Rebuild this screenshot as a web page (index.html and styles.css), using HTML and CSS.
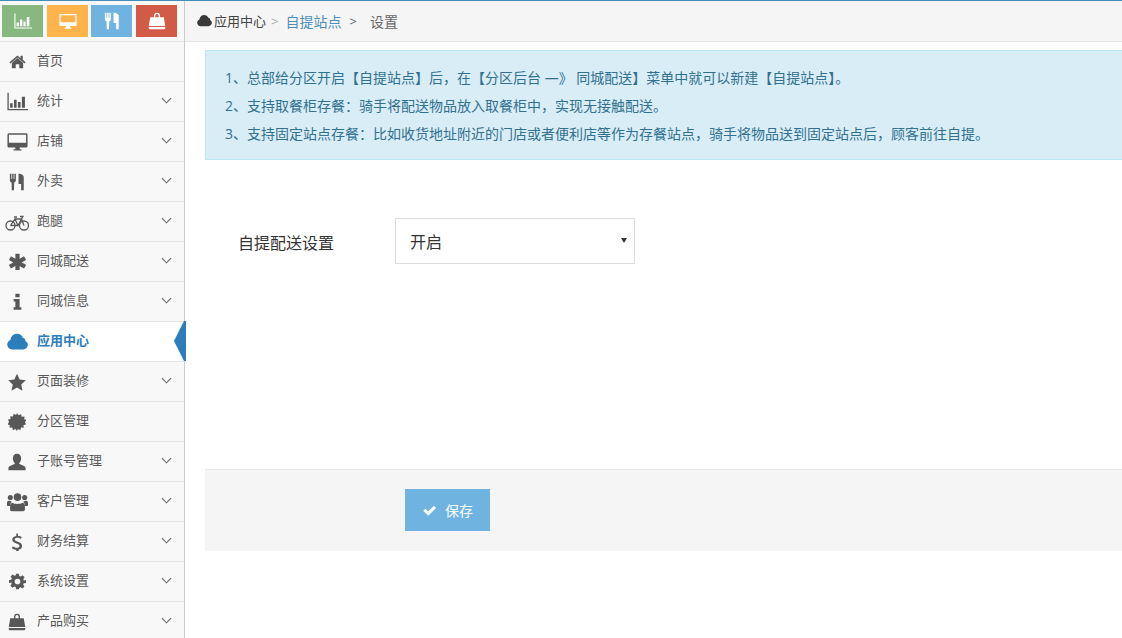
FILE: index.html
```html
<!DOCTYPE html>
<html lang="zh-CN">
<head>
<meta charset="utf-8">
<title>自提站点设置</title>
<link rel="stylesheet" href="styles.css">
</head>
<body>
<svg class="defs" width="0" height="0" aria-hidden="true">
  <symbol id="i-home" viewBox="0 0 24 24"><path d="M12 7.200 4 14v7.500h5.500v-5.500h5v5.500H20V14zM12 3.500.6 13l1.500 1.800L12 6.500l9.900 8.300 1.500-1.800-4-3.400V4h-3.200v3.300z"/></symbol>
  <symbol id="i-chart" viewBox="0 0 24 24"><path d="M.5 2H2v18.500h22V22H.5zM3.500 14h3v5h-3zM8 10h3v9H8zM12.500 12.500h3V19h-3zM17 6.500h3.500V19H17z"/></symbol>
  <symbol id="i-desk" viewBox="0 0 24 24"><path fill-rule="evenodd" d="M2.500 2.500h19A1.800 1.800 0 0 1 23.500 4.300V17a1.800 1.800 0 0 1-2 1.800h-7v2h2v1.400h-9v-1.400h2v-2h-7A1.800 1.800 0 0 1 .5 17V4.300A1.800 1.800 0 0 1 2.500 2.500zM2.200 4.200v9.300h19.600V4.200z"/></symbol>
  <symbol id="i-fork" viewBox="0 0 24 24"><path d="M2.500 1h2v7h1V1h2v7h1V1h2v8.500c0 1.500-1 2.500-2.300 3L8 23H5l-.2-10.500C3.500 12 2.500 11 2.500 9.500zM14 1c4 0 7 1.500 7 5v17h-3.500v-8.500H14z"/></symbol>
  <symbol id="i-bike" viewBox="0 0 24 24"><g fill="none" stroke-width="1.300"><circle cx="5.500" cy="15.500" r="4.500"/><circle cx="19" cy="15.500" r="4.500"/><path d="M5.500 15.500 10 9h6.500l2.500 6.500M10 9l3 6.500h-7.500M16.500 9 13 15.500M9 7h3M15 6.500h3l-1.500 2.500"/></g></symbol>
  <symbol id="i-ast" viewBox="0 0 24 24"><path d="M9 1h6v7.200l6.200-3.600 3 5.200L18 13.300l6.200 3.500-3 5.200-6.200-3.600V24H9v-5.600L2.800 22l-3-5.200L6 13.300-.2 9.800l3-5.200L9 8.200z"/></symbol>
  <symbol id="i-info" viewBox="0 0 24 24"><path d="M9 1h6v5H9zM6.500 8.500h8.500v11.500h2.500v3.500h-11V20H9v-8H6.500z"/></symbol>
  <symbol id="i-cloud" viewBox="0 0 24 24"><path d="M6 21c-3.200 0-5.700-2.500-5.700-5.500 0-2.400 1.500-4.400 3.600-5.200C4.300 6.200 7.500 3.200 11.500 3.200c3 0 5.600 1.800 6.600 4.500 2.700.4 3.200 2.600 2.900 4 1.800.6 2.800 2 2.800 4 0 3-2.300 5.300-5.300 5.300z"/></symbol>
  <symbol id="i-star" viewBox="0 0 24 24"><path d="m12 1 3.500 7.600 8.200 1-6 5.700 1.600 8.200L12 19.400l-7.300 4.100 1.600-8.200-6-5.700 8.200-1z"/></symbol>
  <symbol id="i-cert" viewBox="0 0 24 24"><path d="m12 0 2.200 3 3.300-1.500.8 3.500 3.700-.4-.4 3.700 3.500.8L22.600 12l1.500 3.300-3.500.8.400 3.700-3.700-.4-.8 3.500-3.300-1.500L12 24l-2.200-2.600-3.300 1.500-.8-3.500-3.700.4.400-3.700-3.500-.8L1.400 12-.1 8.700l3.500-.8L3 4.200l3.700.4.800-3.500L10.800 2.600z"/></symbol>
  <symbol id="i-user" viewBox="0 0 24 24"><path d="M12 1c3.400 0 5.500 2.700 5.500 6.200 0 2.500-1 4.800-2.400 6-.4.400-.3 1.200.3 1.500l6 2.500c1.500.6 2.100 2 2.100 3.300V23H.5v-2.500c0-1.300.6-2.700 2.100-3.300l6-2.500c.6-.3.700-1.100.3-1.500-1.400-1.200-2.400-3.500-2.400-6C6.500 3.700 8.600 1 12 1z"/></symbol>
  <symbol id="i-group" viewBox="0 0 24 24"><circle cx="12" cy="7" r="4.300"/><circle cx="3.800" cy="7.500" r="2.900"/><circle cx="20.200" cy="7.500" r="2.900"/><path d="M6 13.500c3 1.800 9 1.800 12 0 1.500.5 2.500 2 2.500 4.500v3c0 1.200-1 2-2 2h-13c-1 0-2-.8-2-2v-3c0-2.500 1-4 2.500-4.500zM0 12.500c1.200-1.600 2.500-1.800 3.800-1 .8.500 1.400.7 1.900.8-1.500 1-2.200 2.700-2.200 4.700H.6c-.4 0-.6-.3-.6-.6zM24 12.500c-1.200-1.600-2.500-1.800-3.800-1-.8.500-1.400.7-1.900.8 1.500 1 2.200 2.700 2.200 4.700h2.900c.4 0 .6-.3.600-.6z"/></symbol>
  <symbol id="i-dollar" viewBox="0 0 24 24"><path d="M11 .5h2.200v3c2.200.2 4 1 5.200 1.800l-1.100 2.500c-1.400-.9-3.100-1.600-5-1.600-2 0-3.300.9-3.300 2.300 0 1.500 1.500 2.100 4.200 3.100 3.300 1.200 5.600 2.500 5.600 5.600 0 2.700-2 4.600-4.600 5v2.800H11v-2.700c-2.300-.1-4.500-1-5.900-2.100l1.300-2.400c1.500 1.100 3.500 2 5.400 2 2.200 0 3.500-1 3.500-2.500 0-1.600-1.400-2.300-4-3.300-3.200-1.200-5.600-2.400-5.600-5.300 0-2.600 2-4.400 5.300-4.800z"/></symbol>
  <symbol id="i-gear" viewBox="0 0 24 24"><path fill-rule="evenodd" d="M10 1h4l.6 3.200 1.900.8 2.700-1.800 2.800 2.800-1.800 2.700.8 1.900L24 10v4l-3.200.6-.8 1.900 1.800 2.700-2.800 2.800-2.700-1.800-1.900.8L14 23h-4l-.6-3.200-1.900-.8-2.700 1.800-2.800-2.800 1.800-2.700-.8-1.900L0 14v-4l3.200-.6.8-1.900-1.800-2.700 2.800-2.800 2.700 1.800 1.900-.8zM12 8a4 4 0 1 0 0 8 4 4 0 0 0 0-8z"/></symbol>
  <symbol id="i-bag" viewBox="0 0 24 24"><path fill-rule="evenodd" d="M8 7V5a4 4 0 0 1 8 0V7h5l2 11.500H1L3 7zM9.800 7h4.400V5a2.200 2.200 0 0 0-4.400 0zM1 20h22v1.200c0 1-.8 1.800-1.800 1.800H2.800c-1 0-1.800-.8-1.800-1.800z"/></symbol>
  <symbol id="i-check" viewBox="0 0 24 24"><path d="m2 12.500 3.500-3.500 4.500 4.500L19 4.500 22.500 8 10 20.500z"/></symbol>
  <symbol id="i-down" viewBox="0 0 24 24"><path d="M2 7 12 17 22 7" fill="none" stroke="currentColor" stroke-width="2.400"/></symbol>
</svg>
<div class="page">
  <aside class="sidebar">
    <div class="shortcuts">
      <a class="sc sc-green"><svg class="sc-ic"><use href="#i-chart"/></svg></a>
      <a class="sc sc-yellow"><svg class="sc-ic"><use href="#i-desk"/></svg></a>
      <a class="sc sc-blue"><svg class="sc-ic"><use href="#i-fork"/></svg></a>
      <a class="sc sc-red"><svg class="sc-ic"><use href="#i-bag"/></svg></a>
    </div>
    <ul class="menu">
      <li class="item"><span class="ico"><svg class="i16"><use href="#i-home"/></svg></span><span class="label">首页</span></li>
      <li class="item"><span class="ico"><svg class="i21"><use href="#i-chart"/></svg></span><span class="label">统计</span><svg class="chev"><use href="#i-down"/></svg></li>
      <li class="item"><span class="ico"><svg class="i21"><use href="#i-desk"/></svg></span><span class="label">店铺</span><svg class="chev"><use href="#i-down"/></svg></li>
      <li class="item"><span class="ico"><svg class="i18"><use href="#i-fork"/></svg></span><span class="label">外卖</span><svg class="chev"><use href="#i-down"/></svg></li>
      <li class="item"><span class="ico"><svg class="i24 bike"><use href="#i-bike"/></svg></span><span class="label">跑腿</span><svg class="chev"><use href="#i-down"/></svg></li>
      <li class="item"><span class="ico"><svg class="i16"><use href="#i-ast"/></svg></span><span class="label">同城配送</span><svg class="chev"><use href="#i-down"/></svg></li>
      <li class="item"><span class="ico"><svg class="i16"><use href="#i-info"/></svg></span><span class="label">同城信息</span><svg class="chev"><use href="#i-down"/></svg></li>
      <li class="item active"><span class="ico"><svg class="i21"><use href="#i-cloud"/></svg></span><span class="label">应用中心</span><span class="pointer"></span></li>
      <li class="item"><span class="ico"><svg class="i18"><use href="#i-star"/></svg></span><span class="label">页面装修</span><svg class="chev"><use href="#i-down"/></svg></li>
      <li class="item"><span class="ico"><svg class="i18"><use href="#i-cert"/></svg></span><span class="label">分区管理</span></li>
      <li class="item"><span class="ico"><svg class="i18"><use href="#i-user"/></svg></span><span class="label">子账号管理</span><svg class="chev"><use href="#i-down"/></svg></li>
      <li class="item"><span class="ico"><svg class="i21"><use href="#i-group"/></svg></span><span class="label">客户管理</span><svg class="chev"><use href="#i-down"/></svg></li>
      <li class="item"><span class="ico"><svg class="i18"><use href="#i-dollar"/></svg></span><span class="label">财务结算</span><svg class="chev"><use href="#i-down"/></svg></li>
      <li class="item"><span class="ico"><svg class="i16"><use href="#i-gear"/></svg></span><span class="label">系统设置</span><svg class="chev"><use href="#i-down"/></svg></li>
      <li class="item"><span class="ico"><svg class="i18"><use href="#i-bag"/></svg></span><span class="label">产品购买</span><svg class="chev"><use href="#i-down"/></svg></li>
    </ul>
  </aside>
  <main class="main">
    <nav class="crumbs">
      <svg class="crumb-ic"><use href="#i-cloud"/></svg>
      <span class="crumb-root">应用中心</span>
      <span class="sep-a">&gt;</span>
      <a class="crumb-link">自提站点</a>
      <span class="sep-b">&gt;</span>
      <span class="crumb-cur">设置</span>
    </nav>
    <section class="content">
      <div class="notice">
        <p>1、总部给分区开启【自提站点】后，在【分区后台 —》 同城配送】菜单中就可以新建【自提站点】。</p>
        <p>2、支持取餐柜存餐：骑手将配送物品放入取餐柜中，实现无接触配送。</p>
        <p>3、支持固定站点存餐：比如收货地址附近的门店或者便利店等作为存餐站点，骑手将物品送到固定站点后，顾客前往自提。</p>
      </div>
      <form class="form">
        <div class="field">
          <label class="field-label" for="pick">自提配送设置</label>
          <div class="select-wrap">
            <select id="pick" class="select"><option>开启</option><option>关闭</option></select>
          </div>
        </div>
        <div class="actions">
          <button type="button" class="save"><svg class="save-ic"><use href="#i-check"/></svg>保存</button>
        </div>
      </form>
    </section>
  </main>
</div>
</body>
</html>
```
FILE: styles.css
```css
* { box-sizing: border-box; }
html, body { margin: 0; height: 100%; overflow: hidden; background: #fff; }
body { font-family: "Open Sans", "Noto Sans CJK SC", sans-serif; font-size: 13px; color: #555; }
.defs { position: absolute; }
.page { display: flex; height: 638px; border-top: 1px solid #438eb9; overflow: hidden; }
.sidebar { flex: 0 0 185px; background: #f8f8f8; border-right: 1px solid #ccc; }
.shortcuts { height: 40px; display: flex; gap: 4px; padding: 4px 0 0 2px; }
.sc { width: 41px; height: 32px; display: flex; align-items: center; justify-content: center; }
.sc-green { background: #87b87f; }
.sc-yellow { background: #ffb44b; }
.sc-blue { background: #6fb3e0; margin-left: -1px; }
.sc-red { background: #d15b47; }
.sc-ic { width: 18px; height: 18px; fill: #fff; }
.menu { list-style: none; margin: 0; padding: 0; }
.item { position: relative; height: 40px; display: flex; align-items: center; border-top: 1px solid #e5e5e5; color: #585858; }
.ico { flex: 0 0 34px; display: flex; justify-content: center; fill: #585858; stroke: #585858; }
.ico svg { stroke-width: 0; }
.i16 { width: 17px; height: 17px; }
.i18 { width: 18px; height: 18px; }
.i21 { width: 21px; height: 21px; }
.i24 { width: 24px; height: 24px; }
.label { margin-left: 3px; flex: 1; line-height: 20px; position: relative; top: -2px; }
.chev { width: 11px; height: 11px; margin-right: 12px; color: #666; position: relative; top: -1px; }
.active { background: #fff; color: #2b7dbc; font-weight: 700; }
.active .ico { fill: #2b7dbc; stroke: #2b7dbc; }
.pointer { position: absolute; right: -2px; top: -1px; width: 12px; height: 40px; background: #2b7dbc; clip-path: polygon(0 50%, 10px 0, 100% 0, 100% 100%, 10px 100%); }
.main { flex: 1; min-width: 0; }
.crumbs { height: 41px; background: #f5f5f5; border-bottom: 1px solid #e5e5e5; display: flex; align-items: center; padding-left: 12px; font-size: 14px; color: #666; }
.crumb-ic { width: 15px; height: 15px; fill: #393939; position: relative; top: -1px; }
.crumb-root { font-size: 13px; color: #444; margin-left: 2px; position: relative; top: -1px; }
.sep-a { margin-left: 5px; color: #aaa; font-size: 13px; }
.crumb-link { margin-left: 7px; color: #4c8fbd; }
.sep-b { margin-left: 8px; color: #666; font-size: 13px; }
.crumb-cur { margin-left: 13px; color: #666; }
.content { padding: 8px 0 0 20px; }
.notice { height: 110px; background: #d9edf7; border: 1px solid #bce8f1; border-right: 0; padding: 13px 0 0 19px; color: #31708f; font-size: 14px; }
.notice p { margin: 0; line-height: 28px; white-space: nowrap; }
.form { display: block; }
.field { display: flex; align-items: center; height: 46px; margin-top: 58px; }
.field-label { width: 190px; padding-left: 33px; font-size: 16px; color: #333; position: relative; top: 1px; }
.select-wrap { position: relative; width: 240px; height: 46px; }
.select-wrap::after { content: ""; position: absolute; right: 8px; top: 20px; border: 3.500px solid transparent; border-top: 5px solid #333; border-bottom: 0; pointer-events: none; }
.select { appearance: none; width: 100%; height: 100%; border: 1px solid #ddd; background: #fff; padding: 2px 14px 0; font: 16px "Open Sans", "Noto Sans CJK SC", sans-serif; color: #333; border-radius: 0; }
.actions { height: 82px; margin-top: 205px; background: #f5f5f5; border-top: 1px solid #e5e5e5; padding: 19px 0 0 200px; }
.save { width: 85px; height: 42px; border: 0; background: #6fb3e0; color: #fff; font: 14px "Open Sans", "Noto Sans CJK SC", sans-serif; display: flex; align-items: center; justify-content: center; gap: 8px; padding: 0; }
.save-ic { width: 15px; height: 15px; fill: #fff; }
```
